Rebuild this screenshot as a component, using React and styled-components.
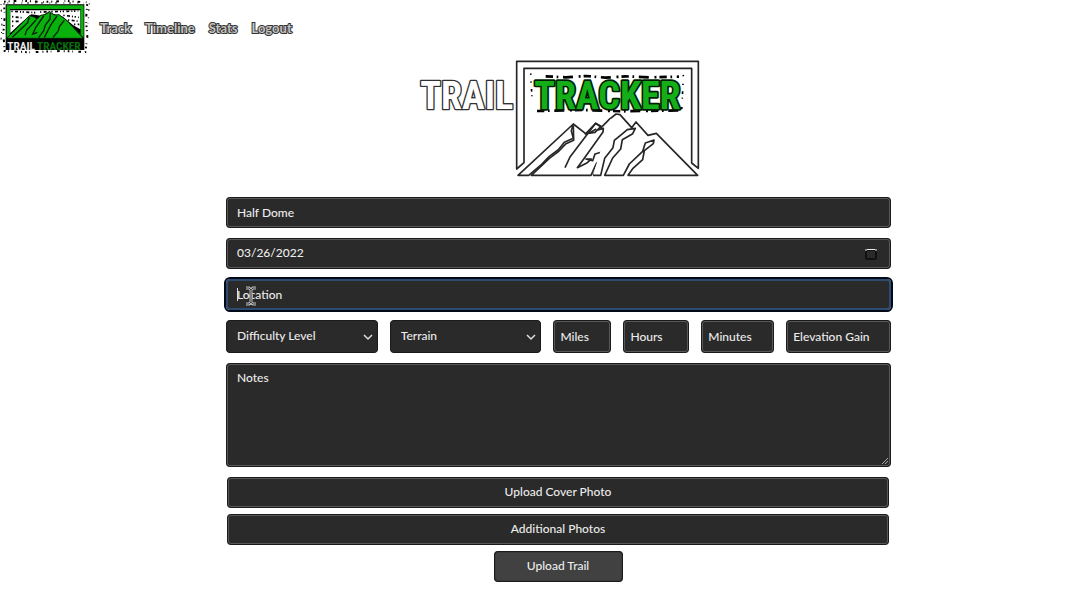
import React from 'react';
import styled, { createGlobalStyle } from 'styled-components';

const GlobalStyle = createGlobalStyle`
  *, *::before, *::after { box-sizing: border-box; }
  body {
    margin: 0;
    background: #fff;
    color: #e4e4e4;
    font-family: Lato, "Liberation Sans", sans-serif;
    font-size: 12px;
  }
`;

const Header = styled.header`
  display: flex;
  align-items: center;
  gap: 4px;
  height: 56px;
`;

const HomeLink = styled.a`
  display: block;
  height: 56px;
`;

const Nav = styled.nav`
  display: flex;
  gap: 14px;
`;

const NavLink = styled.a`
  color: #c4c4c4;
  font-size: 13px;
  line-height: 16px;
  font-weight: 700;
  text-decoration: none;
  paint-order: stroke fill;
  -webkit-text-stroke: 2px #333;
`;

const Main = styled.main`
  display: flex;
  flex-direction: column;
  align-items: center;
  padding: 0 0 24px 37px;
`;

const Banner = styled.h1`
  margin: 0 0 11px;
  height: 130px;
  display: flex;
  align-items: flex-end;
`;

const Form = styled.form`
  display: flex;
  flex-direction: column;
  gap: 10px;
  width: 100%;
  max-width: 665px;
`;

const FieldBox = styled.div`
  position: relative;
  min-width: 0;
`;

const fieldLook = `
  display: block;
  width: 100%;
  margin: 0;
  border: 2px solid #585858;
  outline: 1px solid #1a1a1a;
  outline-offset: -1px;
  border-radius: 4px;
  background: #2a2a2a;
  color: #ececec;
  font: 500 12px/16px Lato, "Liberation Sans", sans-serif;
  &::placeholder { color: #ececec; opacity: 1; }
`;

const Field = styled.input`
  ${fieldLook}
  height: ${p => (p.$tall ? 33 : 31)}px;
  padding: 0 ${p => (p.$tall ? 5 : 9)}px 1px;
  ${p => p.$active && `
    border-color: #2d4a70;
    outline: 2px solid #020a18;
    outline-offset: 0;
  `}
  &::-webkit-calendar-picker-indicator { opacity: 0; }
  &::-webkit-datetime-edit-fields-wrapper { padding: 0; }
  &::-webkit-datetime-edit-month-field,
  &::-webkit-datetime-edit-day-field,
  &::-webkit-datetime-edit-year-field { padding: 0; }
`;

const Select = styled.select`
  ${fieldLook}
  appearance: none;
  height: 33px;
  padding: 0 24px 1px 10px;
  border-width: 1px;
  border-color: #333;
`;

const Notes = styled.textarea`
  ${fieldLook}
  height: 104px;
  padding: 5px 9px;
  resize: none;
`;

const Details = styled.div`
  display: grid;
  grid-template-columns: 152fr 152fr 58fr 66fr 73fr 105fr;
  gap: 12px;
`;

const Actions = styled.div`
  display: flex;
  flex-direction: column;
  align-items: center;
  gap: 6px;
  padding: 0 2px 0 1px;
`;

const PhotoButton = styled.button`
  ${fieldLook}
  height: 31px;
  padding: 0 0 2px;
  text-align: center;
`;

const SubmitButton = styled(PhotoButton)`
  width: 129px;
  background: #414141;
  border-color: #3a3a3a;
`;

const FieldIcon = styled.svg`
  position: absolute;
  right: ${p => p.$right}px;
  top: 50%;
  margin-top: -6px;
  pointer-events: none;
`;

const Caret = styled.span`
  position: absolute;
  left: 11px;
  top: 9px;
  width: 1px;
  height: 13px;
  background: #e0e0e0;
`;

const Pointer = styled.svg`
  position: absolute;
  left: 19px;
  top: 7px;
  pointer-events: none;
`;

const Grip = styled.svg`
  position: absolute;
  right: 2px;
  bottom: 2px;
  pointer-events: none;
`;

const LogoText = styled.text`
  font-family: "Liberation Sans Narrow", "Roboto Condensed", "DejaVu Sans Condensed", sans-serif;
  font-weight: 700;
  paint-order: stroke fill;
  stroke-linejoin: round;
`;

function NavLogo() {
  return (
    <svg width="96" height="56" viewBox="0 0 288 168" role="img" aria-label="Trail Tracker">
      <path d="M12 5L60 2L130 6L200 3L262 7L258 60L262 110L256 156L180 153L90 157L14 153L10 100L14 50Z" fill="none" stroke="#000" strokeWidth="6" strokeDasharray="5 9 3 12 8 17 2 8" />
      <path d="M3 12L6 80L2 132M268 10L264 70M22 9H250" fill="none" stroke="#000" strokeWidth="3" strokeDasharray="3 14 6 19" />
      <path d="M17 13H253V150H17Z" fill="#000" />
      <path d="M31 31H241V88L220 76L188 50L168 44L145 37L124 47L94 43L62 70L31 99Z" fill="#fff" />
      <path d="M34 34L108 38M120 36L235 33M36 50L70 54M190 46L237 52M36 64H56M204 60L238 64M36 78H44M222 73H238" fill="none" stroke="#000" strokeWidth="5" strokeDasharray="4 7 9 6 3 5" />
      <path d="M20 114V16H251V113L242 105V27H30V107Z" fill="#08b10c" />
      <path d="M20 115L88 47L103 51L111 58L122 46L134 44L149 35L163 45L177 44L199 60L250 115Z" fill="#08b10c" stroke="#021f03" strokeWidth="3" />
      <path d="M88 51L83 68L37 112M108 60L80 91L75 106M131 48L107 83L98 103L112 97M151 39L150 57L136 75L131 92L116 113M171 48L153 74L144 91L133 112M193 61L179 78L174 94L159 112" fill="none" stroke="#021f03" strokeWidth="4" />
      <LogoText x="22" y="149" fontSize="34" fill="#e6e6e6">TRAIL</LogoText>
      <LogoText x="111" y="149" fontSize="34" fill="#07720c">TRACKER</LogoText>
    </svg>
  );
}

function BannerLogo() {
  return (
    <svg width="300" height="135" viewBox="0 0 900 405" role="img" aria-label="Trail Tracker">
      <g fill="#fff" stroke="#262626" strokeWidth="5" strokeLinejoin="round">
        <path d="M323 354V31H868V352L848 336V52H345V335Z" />
        <path d="M327 373L493 219L487 239L493 262L466 274L448 296L421 316L398 340L359 373Z" />
        <path d="M468 350L483 318L508 285L560 217L576 226L558 244L530 248L493 219M493 225L494 268L471 278L450 300L421 322L367 373H546L562 338L575 325L579 303L558 309L551 329L531 324L547 324L535 335L505 350L528 319L582 243L583 232L562 238" fill="none" />
        <path d="M552 373L574 333L584 307L610 278L610 262L629 247L628 198L618 207L603 203L577 229L560 217L529 249L541 246L562 234" fill="none" />
        <path d="M604 203L621 189L633 191L668 230L681 213L717 253L742 247L866 373H657L671 353L701 326L706 299L733 278L735 267L709 276L701 301L661 339L643 373H587L611 321L635 294L640 266L671 248L679 232L655 236L638 250L616 268L612 290L587 322L575 373H552" />
      </g>
      <path d="M364 68L372 75M822 72L829 88M366 91L370 153M822 98L818 180" fill="none" stroke="#000" strokeWidth="5" strokeDasharray="4 19 8 11 3 25 6 14" />
      <path d="M410 76L470 79L530 75L590 80L650 76L720 79L810 77M384 180L520 177L640 181L815 178" fill="none" stroke="#000" strokeWidth="8" strokeDasharray="22 11 5 14 30 17 6 9" />
      <LogoText x="34" y="175" fontSize="114" fill="#fff" stroke="#303030" strokeWidth="8">TRAIL</LogoText>
      <LogoText x="376" y="175" fontSize="114" fill="#13ae18" stroke="#001d02" strokeWidth="10">TRACKER</LogoText>
    </svg>
  );
}

function SelectField({ label }) {
  return (
    <FieldBox>
      <Select aria-label={label} defaultValue={label}><option>{label}</option></Select>
      <FieldIcon $right={4} width="12" height="12" viewBox="0 0 12 12">
        <path d="M2 4L6 8L10 4" fill="none" stroke="#ddd" strokeWidth="1.5" />
      </FieldIcon>
    </FieldBox>
  );
}

function NumberField({ label }) {
  return (
    <FieldBox>
      <Field $tall aria-label={label} placeholder={label} inputMode="numeric" />
    </FieldBox>
  );
}

export default function App() {
  return (
    <>
      <GlobalStyle />
      <Header>
        <HomeLink href="#"><NavLogo /></HomeLink>
        <Nav>
          {['Track', 'Timeline', 'Stats', 'Logout'].map(item => (
            <NavLink key={item} href={`#${item.toLowerCase()}`}>{item}</NavLink>
          ))}
        </Nav>
      </Header>
      <Main>
        <Banner><BannerLogo /></Banner>
        <Form onSubmit={e => e.preventDefault()}>
          <FieldBox>
            <Field aria-label="Trail name" defaultValue="Half Dome" />
          </FieldBox>
          <FieldBox>
            <Field aria-label="Date" type="date" defaultValue="2022-03-26" />
            <FieldIcon $right={14} width="12" height="12" viewBox="0 0 12 12">
              <rect x="1" y="2" width="10" height="9" rx="1" fill="none" stroke="#101010" strokeWidth="2" />
              <path d="M1 1V3M11 1V3M2 1.5H10" stroke="#eee" strokeWidth="1" />
            </FieldIcon>
          </FieldBox>
          <FieldBox>
            <Field $active aria-label="Location" placeholder="Location" />
            <Caret />
            <Pointer width="12" height="20" viewBox="0 0 12 20">
              <path d="M1 2H4L6 4L8 2H11M6 4V16M1 18H4L6 16L8 18H11M4 10H8" fill="none" stroke="#b5b5b5" strokeWidth="3" />
              <path d="M1 2H4L6 4L8 2H11M6 4V16M1 18H4L6 16L8 18H11" fill="none" stroke="#444" strokeWidth="1" />
            </Pointer>
          </FieldBox>
          <Details>
            <SelectField label="Difficulty Level" />
            <SelectField label="Terrain" />
            <NumberField label="Miles" />
            <NumberField label="Hours" />
            <NumberField label="Minutes" />
            <NumberField label="Elevation Gain" />
          </Details>
          <FieldBox>
            <Notes aria-label="Notes" placeholder="Notes" />
            <Grip width="8" height="8" viewBox="0 0 8 8">
              <path d="M1 7L7 1M4 7L7 4" stroke="#aaa" strokeWidth="1" />
            </Grip>
          </FieldBox>
          <Actions>
            <PhotoButton type="button">Upload Cover Photo</PhotoButton>
            <PhotoButton type="button">Additional Photos</PhotoButton>
            <SubmitButton type="submit">Upload Trail</SubmitButton>
          </Actions>
        </Form>
      </Main>
    </>
  );
}
